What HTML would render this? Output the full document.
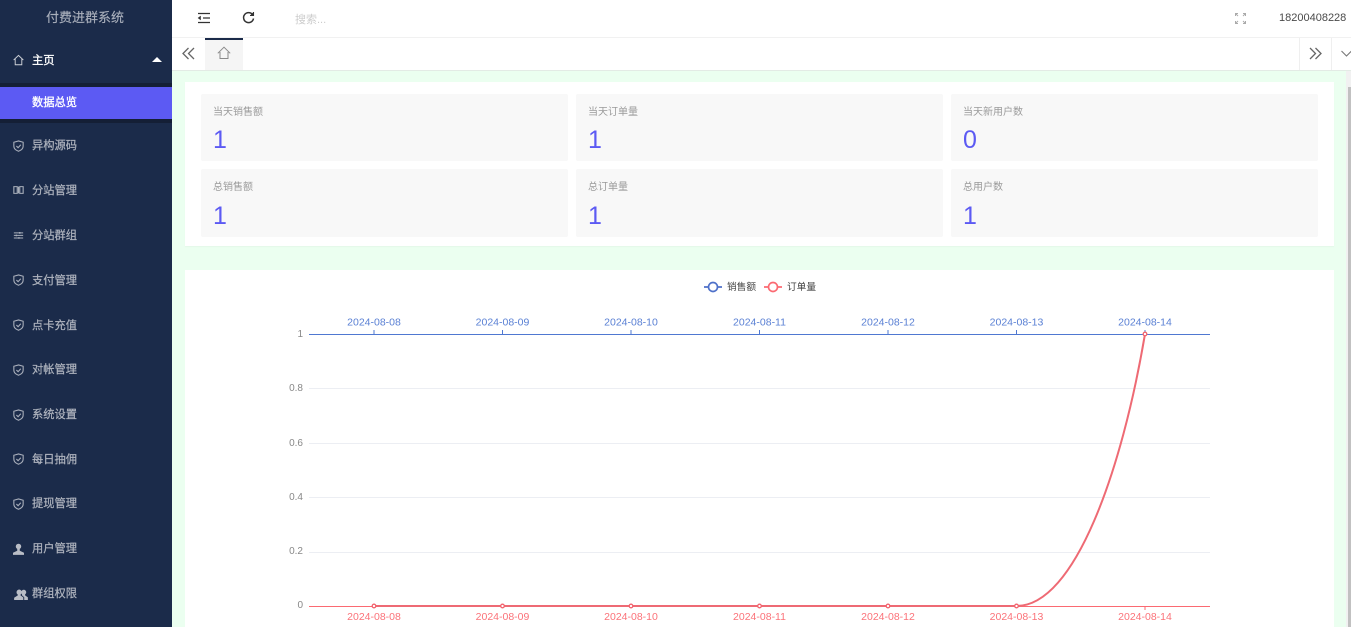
<!DOCTYPE html>
<html lang="zh-CN"><head><meta charset="utf-8"><title>付费进群系统</title>
<style>
*{box-sizing:border-box}
html,body{margin:0;padding:0;width:1351px;height:627px;overflow:hidden;background:#fff;font-family:"Liberation Sans","Noto Sans CJK SC",sans-serif}
.abs{position:absolute}
#side{left:0;top:0;width:172px;height:627px;background:#1b2b4a;overflow:hidden}
#logo{left:0;top:0;width:170px;height:37px;line-height:36px;text-align:center;color:#a9afbb;font-size:13px;-webkit-text-stroke:.15px #a9afbb}
.mi{position:absolute;left:32px;font-size:11.250px;line-height:16px;color:#b0b5bf;white-space:nowrap;-webkit-text-stroke:.2px #b0b5bf}
.ic{position:absolute;left:13px;width:11px;height:12px}
#sub{left:0;top:83px;width:172px;height:40px;background:#141f36}
#act{left:0;top:87px;width:172px;height:32px;background:#5c5af3;color:#fff;font-size:11.250px;line-height:33px;padding-left:32px;-webkit-text-stroke:.35px #fff}
#main{left:172px;top:71px;width:1174px;height:556px;background:#ebfff0}
.card{position:absolute;background:#fff}
.st{position:absolute;background:#f8f8f8;border-radius:2px}
.st .l{position:absolute;left:12px;top:11px;font-size:10px;line-height:15px;color:#9a9a9a;white-space:nowrap}
.st .v{position:absolute;left:12px;font-size:25px;line-height:28px;color:#5c5af3}
</style></head><body>
<div class="abs" id="side">
<div class="abs" id="logo">付费进群系统</div>
<div class="abs" id="sub"></div>
<svg class="ic" style="top:54px" viewBox="0 0 13 14" fill="none" stroke="#d0d3d9" stroke-width="1.100"><path d="M.8 7 6.5 1.600 12.200 7M2.600 6v6.600h7.800V6"/></svg>
<div class="mi" style="top:53px;color:#fff;-webkit-text-stroke:.3px #fff">主页</div>
<svg class="abs" style="left:152px;top:57px" width="10" height="5"><path d="M0 5 5 0l5 5z" fill="#fff"/></svg>
<div class="abs" id="act">数据总览</div>

<svg class="ic" style="top:140px" viewBox="0 0 13 14" fill="none" stroke="#a9afbb" stroke-width="1.300"><path d="M6.500 1 12 2.600v4.600c0 3-2.600 5-5.500 6C3.600 12.200 1 10.200 1 7.200V2.600z"/><path d="m4 7 2 2 3.200-3.500"/></svg>
<div class="mi" style="top:138px">异构源码</div>

<svg class="ic" style="top:184px" viewBox="0 0 13 14" fill="none" stroke="#a9afbb" stroke-width="1.300"><path d="M1 3h4v8H1zM8 3h4v8H8zM6.500 3v8"/></svg>
<div class="mi" style="top:183px">分站管理</div>

<svg class="ic" style="top:229px" viewBox="0 0 13 14" fill="none" stroke="#a9afbb" stroke-width="1.200"><path d="M1 4.500h11M1 7.500h11M1 10.500h11"/><path d="M8 3.500v2M4 6.500v2M7 9.500v2" stroke-width="1.600"/></svg>
<div class="mi" style="top:228px">分站群组</div>

<svg class="ic" style="top:274px" viewBox="0 0 13 14" fill="none" stroke="#a9afbb" stroke-width="1.300"><path d="M6.500 1 12 2.600v4.600c0 3-2.600 5-5.500 6C3.600 12.200 1 10.200 1 7.200V2.600z"/><path d="m4 7 2 2 3.200-3.500"/></svg>
<div class="mi" style="top:273px">支付管理</div>

<svg class="ic" style="top:319px" viewBox="0 0 13 14" fill="none" stroke="#a9afbb" stroke-width="1.300"><path d="M6.500 1 12 2.600v4.600c0 3-2.600 5-5.500 6C3.600 12.200 1 10.200 1 7.200V2.600z"/><path d="m4 7 2 2 3.200-3.500"/></svg>
<div class="mi" style="top:318px">点卡充值</div>

<svg class="ic" style="top:364px" viewBox="0 0 13 14" fill="none" stroke="#a9afbb" stroke-width="1.300"><path d="M6.500 1 12 2.600v4.600c0 3-2.600 5-5.500 6C3.600 12.200 1 10.200 1 7.200V2.600z"/><path d="m4 7 2 2 3.200-3.500"/></svg>
<div class="mi" style="top:362px">对帐管理</div>

<svg class="ic" style="top:409px" viewBox="0 0 13 14" fill="none" stroke="#a9afbb" stroke-width="1.300"><path d="M6.500 1 12 2.600v4.600c0 3-2.600 5-5.500 6C3.600 12.200 1 10.200 1 7.200V2.600z"/><path d="m4 7 2 2 3.200-3.500"/></svg>
<div class="mi" style="top:407px">系统设置</div>

<svg class="ic" style="top:453px" viewBox="0 0 13 14" fill="none" stroke="#a9afbb" stroke-width="1.300"><path d="M6.500 1 12 2.600v4.600c0 3-2.600 5-5.500 6C3.600 12.200 1 10.200 1 7.200V2.600z"/><path d="m4 7 2 2 3.200-3.500"/></svg>
<div class="mi" style="top:452px">每日抽佣</div>

<svg class="ic" style="top:498px" viewBox="0 0 13 14" fill="none" stroke="#a9afbb" stroke-width="1.300"><path d="M6.500 1 12 2.600v4.600c0 3-2.600 5-5.500 6C3.600 12.200 1 10.200 1 7.200V2.600z"/><path d="m4 7 2 2 3.200-3.500"/></svg>
<div class="mi" style="top:496px">提现管理</div>

<svg class="ic" style="top:543px" viewBox="0 0 13 14" fill="#b9bdc6"><circle cx="6.500" cy="4" r="3.200"/><path d="M5 6.500h3V9l5 2.500V14H0v-2.500L5 9z"/></svg>
<div class="mi" style="top:541px">用户管理</div>

<svg class="abs" style="left:14px;top:589px" width="14" height="11" viewBox="0 0 15 12" fill="#b9bdc6"><circle cx="5.500" cy="3.500" r="2.900"/><circle cx="10.500" cy="3.500" r="2.700"/><path d="M4 5h3v2l3 2.200V12H0V9.500L4 7zM8.500 5H12v2l3 2.200V12h-4V9L8.500 6.800z"/></svg>
<div class="mi" style="top:586px">群组权限</div>
</div>

<!-- top bar -->
<div class="abs" style="left:172px;top:0;width:1179px;height:38px;background:#fff;border-bottom:1px solid #f1f1f1"></div>
<svg class="abs" style="left:197px;top:12px" width="14" height="12" viewBox="0 0 14 12" fill="none" stroke="#333" stroke-width="1.300"><path d="M1 1.500h12M6 6h7M1 10.500h12"/><path d="M3.500 4.300 1.200 6l2.300 1.700z" fill="#333" stroke-width=".6"/></svg>
<svg class="abs" style="left:242px;top:11px" width="13" height="14" viewBox="0 0 13 14" fill="none" stroke="#333" stroke-width="1.500"><path d="M10.500 3.500A5 5 0 1 0 11.500 7.500"/><path d="M11.500 1v3.500H8" stroke-width="1.100" fill="#333"/></svg>
<div class="abs" style="left:295px;top:12px;font-size:11px;line-height:16px;color:#ccc">搜索...</div>
<svg class="abs" style="left:1235px;top:13px" width="11" height="11" viewBox="0 0 11 11" fill="none" stroke="#aaa" stroke-width="1"><path d="M.5 3v-2.500H3M8 .5h2.500V3M10.500 8v2.500H8M3 10.500H.5V8M1 1l2 2M10 1 8 3M10 10 8 8M1 10l2-2"/></svg>
<div class="abs" style="left:1279px;top:11px;font-size:11px;line-height:15px;color:#4a4a4a;white-space:nowrap">18200408228</div>

<!-- tab bar -->
<div class="abs" style="left:172px;top:38px;width:1179px;height:33px;background:#fff;border-bottom:1px solid #e3ebe5"></div>
<svg class="abs" style="left:182px;top:47px" width="13" height="13" viewBox="0 0 13 13" fill="none" stroke="#666" stroke-width="1.300"><path d="M6.500 1 1 6.500 6.500 12M12 1 6.500 6.500 12 12"/></svg>
<div class="abs" style="left:205px;top:38px;width:38px;height:32px;background:#f5f5f5;border-top:2px solid #1b2b4a"></div>
<svg class="abs" style="left:217px;top:46px" width="14" height="14" viewBox="0 0 14 14" fill="none" stroke="#8a8a8a" stroke-width="1"><path d="M.8 7.300 7 1.200l6.200 6.100M3 6v6.500h8V6"/></svg>
<div class="abs" style="left:1299px;top:38px;width:1px;height:32px;background:#efefef"></div>
<div class="abs" style="left:1331px;top:38px;width:1px;height:32px;background:#efefef"></div>
<svg class="abs" style="left:1309px;top:47px" width="13" height="13" viewBox="0 0 13 13" fill="none" stroke="#666" stroke-width="1.300"><path d="M1 1l5.500 5.500L1 12M6.500 1 12 6.500 6.500 12"/></svg>
<svg class="abs" style="left:1341px;top:50px" width="10" height="7" viewBox="0 0 10 7" fill="none" stroke="#777" stroke-width="1.100"><path d="M.5 1 5.500 6 10.500 1"/></svg>

<!-- main -->
<div class="abs" id="main">
<div class="card" style="left:13px;top:11px;width:1149px;height:164px;box-shadow:0 1px 1px rgba(0,0,0,.03)">
<div class="st" style="left:16px;top:12px;width:367px;height:67px"><div class="l">当天销售额</div><div class="v" style="top:32px">1</div></div>
<div class="st" style="left:391px;top:12px;width:367px;height:67px"><div class="l">当天订单量</div><div class="v" style="top:32px">1</div></div>
<div class="st" style="left:766px;top:12px;width:367px;height:67px"><div class="l">当天新用户数</div><div class="v" style="top:32px">0</div></div>
<div class="st" style="left:16px;top:87px;width:367px;height:68px"><div class="l">总销售额</div><div class="v" style="top:33px">1</div></div>
<div class="st" style="left:391px;top:87px;width:367px;height:68px"><div class="l">总订单量</div><div class="v" style="top:33px">1</div></div>
<div class="st" style="left:766px;top:87px;width:367px;height:68px"><div class="l">总用户数</div><div class="v" style="top:33px">1</div></div>
</div>
<div class="card" style="left:13px;top:199px;width:1149px;height:357px"></div>
</div>

<!-- scrollbar -->
<div class="abs" style="left:1346px;top:71px;width:5px;height:556px;background:#f1f1f1"></div>
<div class="abs" style="left:1348px;top:87px;width:3px;height:540px;background:#c1c1c1"></div>

<!-- chart -->
<svg class="abs" style="left:0;top:0" width="1351" height="627" font-family="Liberation Sans, Noto Sans CJK SC, sans-serif" font-size="10.500">
<g fill="none">
<path d="M704 287h18" stroke="#4f71c9" stroke-width="1.700"/><circle cx="713" cy="287" r="4.500" fill="#fff" stroke="#4f71c9" stroke-width="1.700"/>
<path d="M764 287h18" stroke="#fb6a72" stroke-width="1.700"/><circle cx="773" cy="287" r="4.500" fill="#fff" stroke="#fb6a72" stroke-width="1.700"/>
</g>
<text x="727" y="290" fill="#444" font-size="9.700">销售额</text>
<text x="787" y="290" fill="#444" font-size="9.700">订单量</text>

<g stroke="#eceef3" stroke-width="1"><path d="M309 388.500h901M309 443.500h901M309 497.500h901M309 552.500h901"/></g>
<path d="M309 334.500h901" stroke="#4f78d1" stroke-width="1"/>
<path d="M374 330v4M502.500 330v4M631 330v4M759.500 330v4M888 330v4M1016.500 330v4M1145 330v4" stroke="#4f78d1"/>
<path d="M309 606.500h901" stroke="#fb6a72" stroke-width="1"/>
<path d="M1145 606v4" stroke="#fb6a72"/>

<g fill="#888" text-anchor="end" font-size="10">
<text x="303" y="337">1</text><text x="303" y="391">0.8</text><text x="303" y="446">0.6</text><text x="303" y="500">0.4</text><text x="303" y="554">0.2</text><text x="303" y="608">0</text>
</g>
<g fill="#5a80d4" text-anchor="middle">
<text x="374" y="325.500">2024-08-08</text><text x="502.500" y="325.500">2024-08-09</text><text x="631" y="325.500">2024-08-10</text><text x="759.500" y="325.500">2024-08-11</text><text x="888" y="325.500">2024-08-12</text><text x="1016.500" y="325.500">2024-08-13</text><text x="1145" y="325.500">2024-08-14</text>
</g>
<g fill="#fb7279" text-anchor="middle">
<text x="374" y="620">2024-08-08</text><text x="502.500" y="620">2024-08-09</text><text x="631" y="620">2024-08-10</text><text x="759.500" y="620">2024-08-11</text><text x="888" y="620">2024-08-12</text><text x="1016.500" y="620">2024-08-13</text><text x="1145" y="620">2024-08-14</text>
</g>

<path d="M374 606H1016.500C1075 606 1122 470 1145 334" fill="none" stroke="#ee6a74" stroke-width="2"/>
<g fill="#fff" stroke="#f3636e" stroke-width="1.300">
<circle cx="374" cy="606" r="1.800"/><circle cx="502.500" cy="606" r="1.800"/><circle cx="631" cy="606" r="1.800"/><circle cx="759.500" cy="606" r="1.800"/><circle cx="888" cy="606" r="1.800"/><circle cx="1016.500" cy="606" r="1.800"/><circle cx="1145" cy="334" r="1.800"/>
</g>
</svg>
</body></html>
